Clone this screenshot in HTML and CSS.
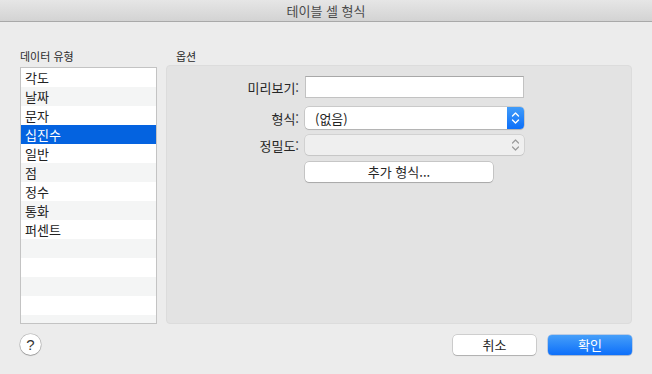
FILE: index.html
```html
<!DOCTYPE html>
<html lang="ko">
<head>
<meta charset="utf-8">
<link rel="stylesheet" href="styles.css">
</head>
<body>
<div class="window">
  <div class="titlebar">테이블 셀 형식</div>
  <div class="content">
    <div class="columns">
      <div class="left">
        <div class="group-label">데이터 유형</div>
        <ul class="list">
          <li>각도</li>
          <li class="alt">날짜</li>
          <li>문자</li>
          <li class="selected">십진수</li>
          <li>일반</li>
          <li class="alt">점</li>
          <li>정수</li>
          <li class="alt">통화</li>
          <li>퍼센트</li>
          <li class="alt"></li>
          <li></li>
          <li class="alt"></li>
          <li></li>
          <li class="alt"></li>
        </ul>
      </div>
      <div class="right">
        <div class="group-label opt-label">옵션</div>
        <div class="options">
          <div class="form">
            <div class="row r1">
              <span class="label">미리보기:</span>
              <div class="textfield"></div>
            </div>
            <div class="row r2">
              <span class="label">형식:</span>
              <div class="popup">
                <span class="popup-text">(없음)</span>
                <span class="stepper">
                  <svg width="9" height="14" viewBox="0 0 9 14"><path d="M1.5 5 L4.5 2 L7.5 5 M1.5 9 L4.5 12 L7.5 9" fill="none" stroke="#fff" stroke-width="1.4" stroke-linecap="round" stroke-linejoin="round"/></svg>
                </span>
              </div>
            </div>
            <div class="row r3">
              <span class="label">정밀도:</span>
              <div class="popup disabled">
                <span class="popup-text"></span>
                <span class="stepper-off">
                  <svg width="9" height="14" viewBox="0 0 9 14"><path d="M1.5 5 L4.5 2 L7.5 5 M1.5 9 L4.5 12 L7.5 9" fill="none" stroke="#9a9a9a" stroke-width="1.2" stroke-linecap="round" stroke-linejoin="round"/></svg>
                </span>
              </div>
            </div>
            <div class="row r4">
              <span class="label"></span>
              <button class="btn wide">추가 형식...</button>
            </div>
          </div>
        </div>
      </div>
    </div>
    <div class="footer">
      <div class="help">?</div>
      <div class="actions">
        <button class="btn cancel">취소</button>
        <button class="btn primary">확인</button>
      </div>
    </div>
  </div>
</div>
</body>
</html>
```

FILE: styles.css
```css
* { box-sizing: border-box; }
html, body {
  margin: 0;
  padding: 0;
  width: 652px;
  height: 374px;
  overflow: hidden;
  background: #ececec;
  font-family: "Noto Sans CJK KR", "Noto Sans", sans-serif;
  color: #262626;
}
.window {
  width: 652px;
  height: 374px;
  display: flex;
  flex-direction: column;
}
.titlebar {
  height: 22px;
  background: linear-gradient(#e6e6e6, #d3d3d3);
  border-bottom: 1px solid #a9a9a9;
  text-align: center;
  font-size: 13px;
  line-height: 21px;
  color: #4a4a4a;
}
.content {
  flex: 1;
  padding: 27px 20px 0 20px;
  display: flex;
  flex-direction: column;
}
.columns {
  display: flex;
  gap: 9px;
}
.left {
  width: 137px;
  display: flex;
  flex-direction: column;
}
.right {
  width: 466px;
  display: flex;
  flex-direction: column;
}
.group-label {
  font-size: 11px;
  line-height: 14px;
  height: 14px;
  margin-bottom: 4px;
  color: #2a2a2a;
}
.opt-label {
  margin-bottom: 2px;
  padding-left: 10px;
}
.list {
  list-style: none;
  margin: 0;
  padding: 0;
  height: 257px;
  border: 1px solid #c3c3c3;
  background: #fff;
  overflow: hidden;
}
.list li {
  height: 19px;
  line-height: 19px;
  font-size: 13px;
  padding-left: 4px;
  color: #222;
}
.list li.alt { background: #f4f5f5; }
.list li.selected { background: #0463e0; color: #fff; }
.options {
  height: 259px;
  background: #e3e3e3;
  border: 1px solid #dcdcdc;
  border-radius: 4px;
  padding-top: 10px;
}
.form {
  display: flex;
  flex-direction: column;
}
.row {
  display: flex;
  align-items: center;
}
.label {
  width: 132px;
  text-align: right;
  font-size: 13px;
  color: #262626;
  margin-right: 6px;
}
.r1 { height: 22px; }
.r2 { height: 22px; margin-top: 9px; }
.r3 { height: 20px; margin-top: 6px; }
.r4 { height: 20px; margin-top: 7px; }
.textfield {
  width: 219px;
  height: 22px;
  background: #fff;
  border: 1px solid #c2c2c2;
  border-top-color: #a8a8a8;
}
.popup {
  width: 219px;
  height: 22px;
  background: #fff;
  border-radius: 4px;
  box-shadow: 0 0 0 0.5px rgba(0,0,0,0.22), 0 1px 1px rgba(0,0,0,0.12);
  display: flex;
  align-items: center;
  overflow: hidden;
}
.popup-text {
  flex: 1;
  font-size: 13px;
  padding-left: 10px;
  color: #222;
}
.stepper {
  width: 17px;
  height: 22px;
  background: linear-gradient(#419cf9, #0c6ff9);
  display: flex;
  align-items: center;
  justify-content: center;
}
.popup.disabled {
  height: 20px;
  background: #efefef;
  box-shadow: 0 0 0 0.5px rgba(0,0,0,0.15), 0 1px 1px rgba(0,0,0,0.06);
}
.stepper-off {
  width: 17px;
  height: 20px;
  display: flex;
  align-items: center;
  justify-content: center;
}
.btn {
  font-family: "Noto Sans CJK KR", "Noto Sans", sans-serif;
  font-size: 13px;
  height: 20px;
  line-height: 18px;
  padding: 0;
  margin: 0;
  background: #fff;
  color: #262626;
  border: none;
  border-radius: 4px;
  box-shadow: 0 0 0 0.5px rgba(0,0,0,0.25), 0 1px 1px rgba(0,0,0,0.15);
}
.btn.wide { width: 188px; }
.footer {
  margin-top: 10px;
  display: flex;
  align-items: center;
  justify-content: space-between;
  height: 21px;
}
.help {
  width: 21px;
  height: 21px;
  border-radius: 50%;
  background: #fff;
  box-shadow: 0 0 0 0.5px rgba(0,0,0,0.25), 0 1px 1px rgba(0,0,0,0.2);
  text-align: center;
  font-family: "Liberation Sans", sans-serif;
  font-size: 15px;
  line-height: 21px;
  color: #333;
}
.actions {
  display: flex;
  gap: 12px;
}
.cancel { width: 83px; }
.primary {
  width: 84px;
  background: linear-gradient(#469ff9, #0d6ffa);
  color: #fff;
  box-shadow: 0 0 0 0.5px rgba(0,80,200,0.4), 0 1px 1px rgba(0,0,0,0.12);
}
```
